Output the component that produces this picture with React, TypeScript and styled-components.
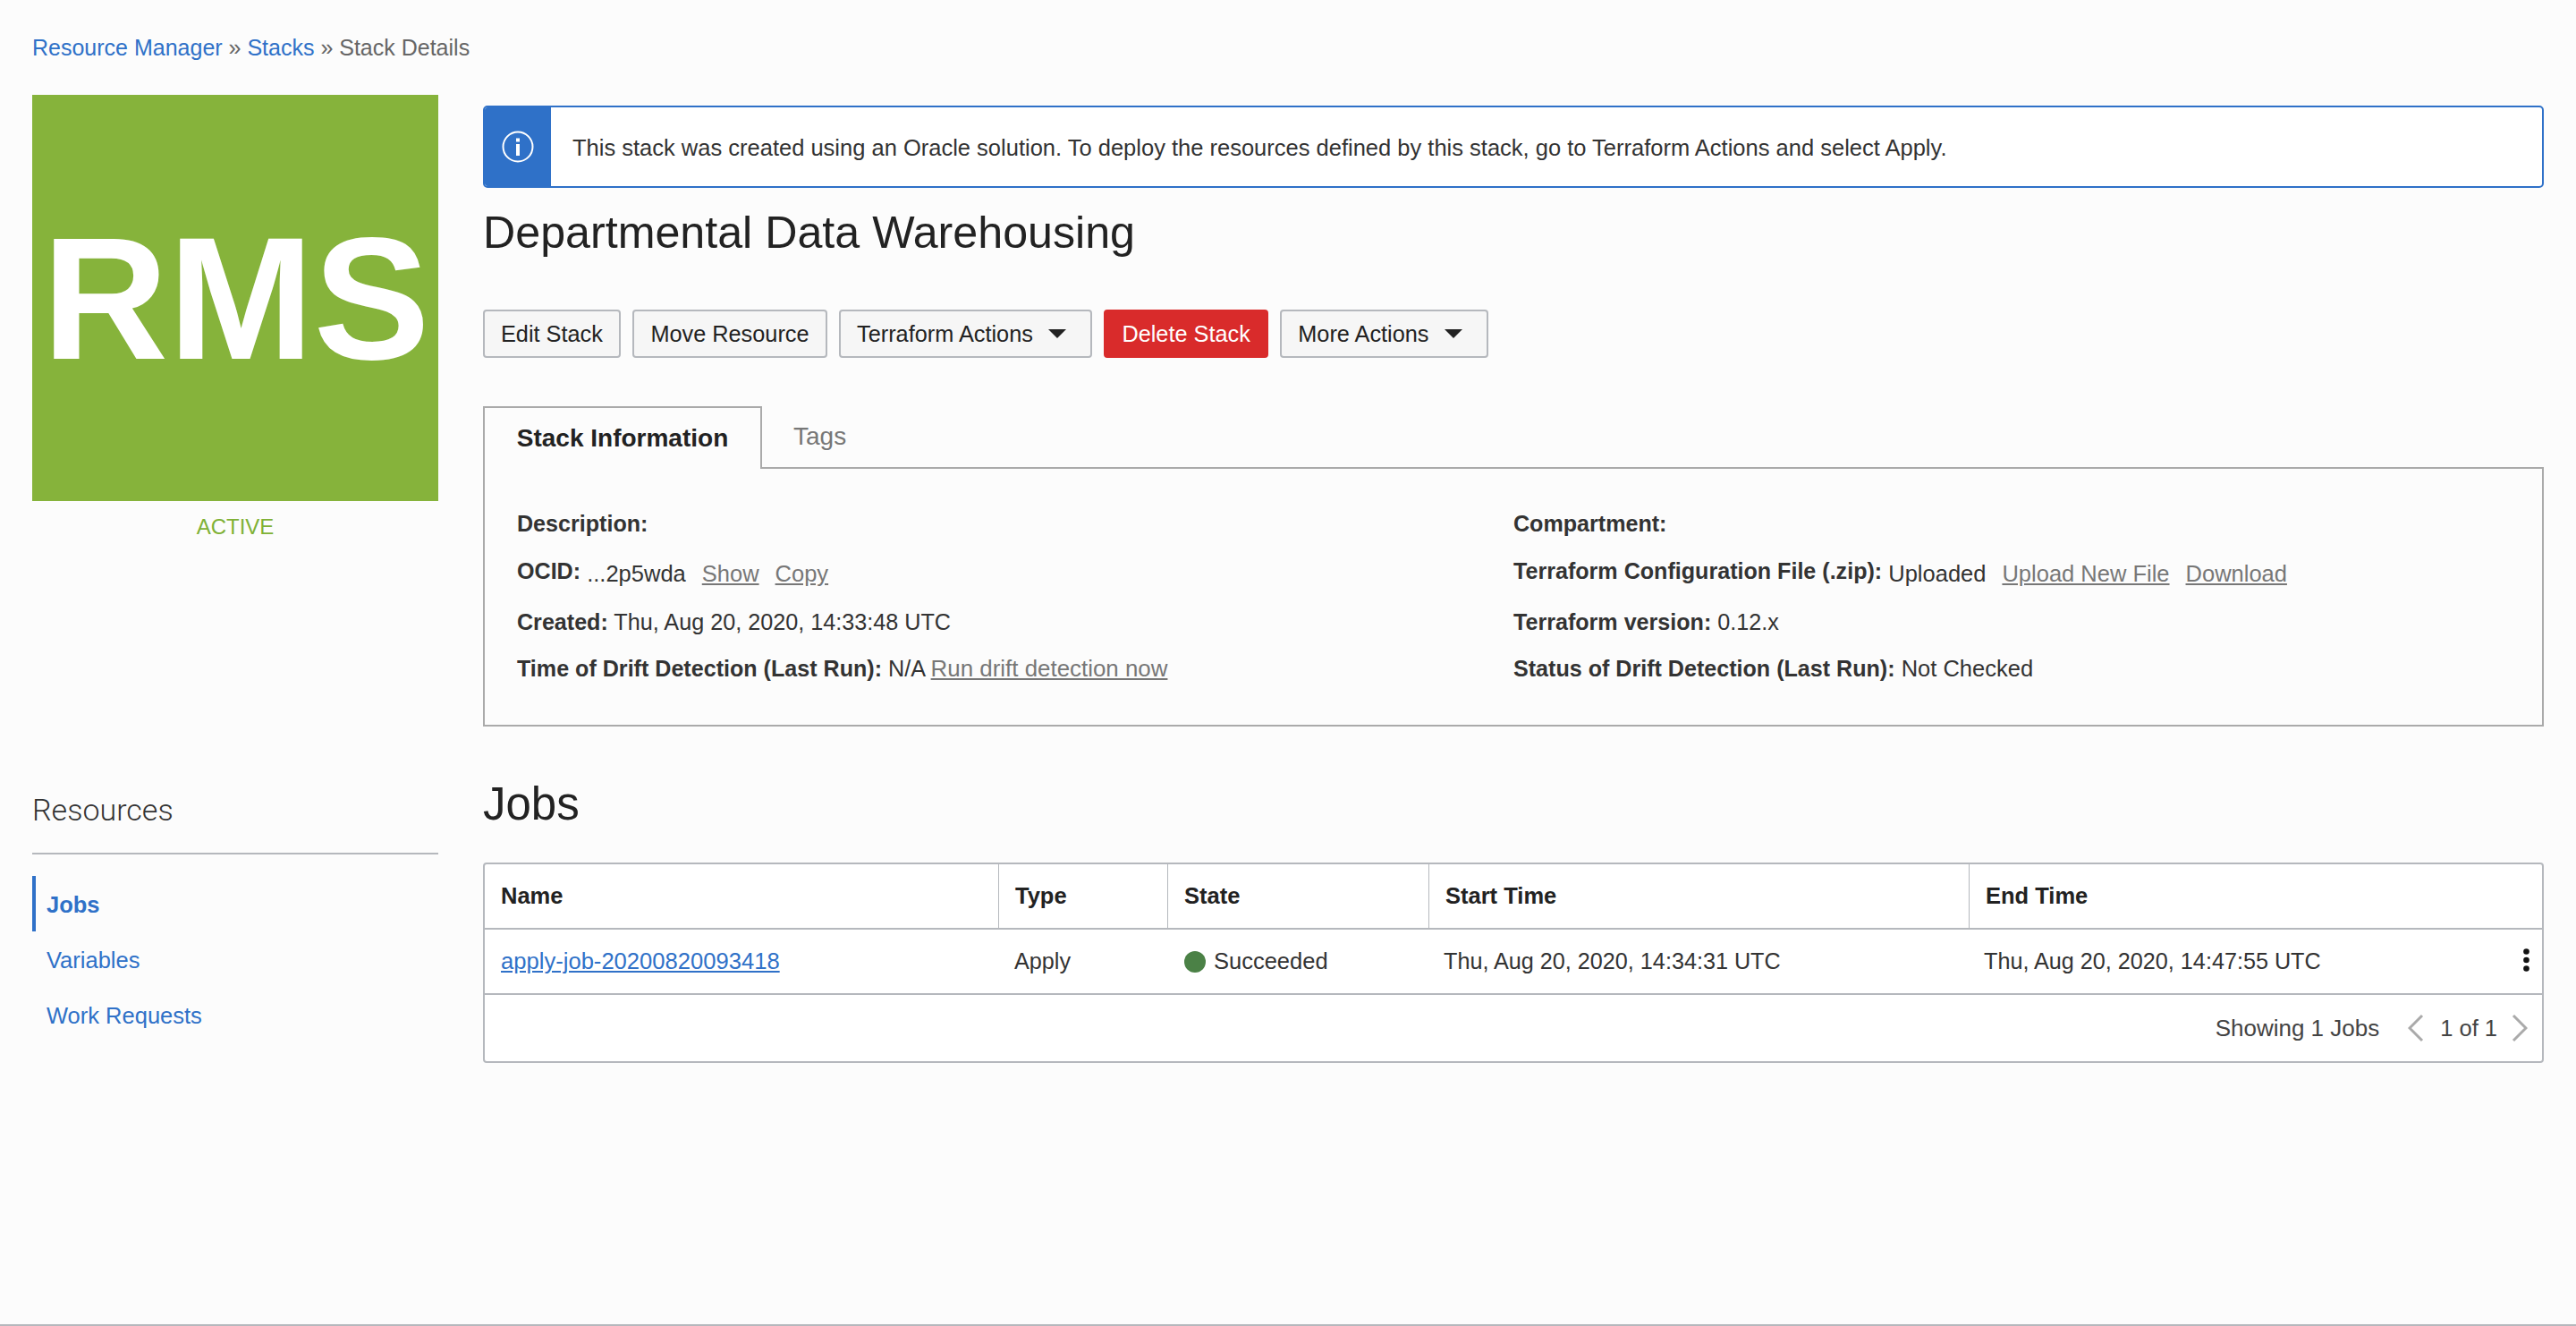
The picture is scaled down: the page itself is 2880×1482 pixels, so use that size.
import React from "react";
import styled, { createGlobalStyle } from "styled-components";

const Global = createGlobalStyle`
  html, body { margin: 0; padding: 0; background: #fcfcfc; }
  body { font-family: "Liberation Sans", Arial, sans-serif; color: #333; }
  * { box-sizing: border-box; }
`;

const Page = styled.div`
  height: 1482px;
  padding: 36px 36px 0;
  border-bottom: 2px solid #b5b8bd;
  overflow: hidden;
`;
const Crumbs = styled.nav`
  font-size: 25px;
  line-height: 34px;
  height: 34px;
  color: #666;
`;
const BlueLink = styled.a`
  color: #2f71c8;
  text-decoration: none;
`;
const Layout = styled.div`
  display: grid;
  grid-template-columns: 454px 1fr;
  column-gap: 50px;
  margin-top: 36px;
`;
const Side = styled.aside`
  display: flex;
  flex-direction: column;
`;
const Logo = styled.div`
  width: 454px;
  height: 454px;
  padding-left: 2px;
  background: #86b33b;
  color: #fff;
  font-weight: 700;
  font-size: 195px;
  line-height: 454px;
  text-align: center;
  white-space: nowrap;
`;
const Status = styled.div`
  margin-top: 14px;
  color: #7fb135;
  font-size: 24px;
  line-height: 30px;
  text-align: center;
`;
const ResTitle = styled.h2`
  margin: 278px 0 0;
  font-family: "Roboto", "Liberation Sans", sans-serif;
  font-weight: 300;
  font-size: 34px;
  line-height: 46px;
  color: #333;
`;
const ResNav = styled.ul`
  list-style: none;
  margin: 25px 0 0;
  padding: 24px 0 0;
  border-top: 2px solid #b5b8bd;
`;
const ResItem = styled.li<{ $active?: boolean }>`
  height: 62px;
  padding: 2px 0 0 12px;
  border-left: 4px solid ${(p) => (p.$active ? "#2f71c8" : "transparent")};
  display: flex;
  align-items: center;
  font-size: 25.5px;
  font-weight: ${(p) => (p.$active ? 700 : 400)};
  color: #2f71c8;
`;
const Content = styled.main`
  min-width: 0;
  padding-top: 12px;
`;
const Banner = styled.div`
  display: flex;
  height: 92px;
  border: 2px solid #2f71c8;
  border-radius: 5px;
  background: #fff;
  overflow: hidden;
`;
const BannerIcon = styled.div`
  width: 74px;
  background: #2f71c8;
  display: flex;
  align-items: center;
  justify-content: center;
  flex: none;
`;
const BannerText = styled.div`
  display: flex;
  align-items: center;
  padding: 2px 0 0 24px;
  font-size: 25.5px;
  color: #333;
`;
const Title = styled.h1`
  margin: 20px 0 0;
  font-size: 50.2px;
  font-weight: 400;
  line-height: 60px;
  color: #222;
`;
const Toolbar = styled.div`
  display: flex;
  gap: 13.5px;
  margin-top: 56px;
`;
const Btn = styled.button<{ $danger?: boolean; $menu?: boolean }>`
  height: 54px;
  padding: 0 ${(p) => (p.$menu ? "27px" : "18px")} 0 18px;
  display: flex;
  align-items: center;
  gap: 17px;
  font-family: inherit;
  font-size: 25.3px;
  color: ${(p) => (p.$danger ? "#fff" : "#222")};
  background: ${(p) => (p.$danger ? "#d92b2b" : "#f6f6f6")};
  border: 2px solid ${(p) => (p.$danger ? "#d92b2b" : "#b5b8bd")};
  border-radius: 4px;
`;
const Caret = styled.span`
  width: 0;
  height: 0;
  border-left: 10px solid transparent;
  border-right: 10px solid transparent;
  border-top: 10px solid #222;
`;
const Tabs = styled.div`
  display: flex;
  align-items: flex-end;
  margin-top: 54px;
  height: 68px;
`;
const ActiveTab = styled.div`
  width: 312px;
  height: 70px;
  margin-bottom: -2px;
  border: 2px solid #aaa;
  border-bottom: 0;
  background: #fcfcfc;
  position: relative;
  z-index: 1;
  display: flex;
  align-items: center;
  justify-content: center;
  font-size: 28px;
  font-weight: 700;
  color: #222;
`;
const Tab = styled.div`
  height: 68px;
  padding: 0 35px;
  display: flex;
  align-items: center;
  font-size: 28px;
  color: #777;
`;
const Panel = styled.section`
  height: 290px;
  border: 2px solid #aaa;
  padding: 46px 36px 0;
  display: grid;
  grid-template-columns: 1114px 1fr;
`;
const Col = styled.div`
  display: flex;
  flex-direction: column;
`;
const Field = styled.div<{ $h: number; $size?: number }>`
  height: ${(p) => p.$h}px;
  font-size: ${(p) => p.$size ?? 25.2}px;
  line-height: 30px;
  color: #333;
  white-space: nowrap;
`;
const Label = styled.b`
  font-size: 25.1px;
  color: #333;
`;
const Raised = styled(Label)`
  position: relative;
  top: -3px;
`;
const GreyLink = styled.a<{ $gap?: number; $size?: number }>`
  color: #777;
  text-decoration: underline;
  margin-left: ${(p) => p.$gap ?? 0}px;
  font-size: ${(p) => (p.$size ? `${p.$size}px` : "inherit")};
`;
const JobsTitle = styled.h2`
  margin: 57px 0 0;
  font-size: 51px;
  font-weight: 400;
  line-height: 60px;
  color: #222;
`;
const TableWrap = styled.div`
  margin-top: 35px;
  border: 2px solid #b5b8bd;
  border-radius: 4px;
  background: #fff;
  height: 224px;
`;
const Row = styled.div`
  display: grid;
  grid-template-columns: 575px 189px 292px 604px 1fr;
  height: 73px;
  border-bottom: 2px solid #b5b8bd;
`;
const HeadCell = styled.div<{ $last?: boolean }>`
  display: flex;
  align-items: center;
  padding-left: 18px;
  font-size: 25.5px;
  font-weight: 700;
  color: #222;
  border-right: ${(p) => (p.$last ? "0" : "1px solid #b5b8bd")};
`;
const Cell = styled.div<{ $pad?: number; $size?: number }>`
  display: flex;
  align-items: center;
  padding-left: ${(p) => p.$pad ?? 16}px;
  font-size: ${(p) => p.$size ?? 25.2}px;
  color: #333;
  position: relative;
  white-space: nowrap;
`;
const JobLink = styled.a`
  color: #2f71c8;
  text-decoration: underline;
`;
const Dot = styled.span`
  width: 24px;
  height: 24px;
  border-radius: 50%;
  background: #4b8146;
  margin-right: 9px;
`;
const Kebab = styled.svg`
  position: absolute;
  right: 14px;
  top: calc(50% - 2px);
  transform: translateY(-50%);
`;
const Footer = styled.div`
  display: flex;
  align-items: center;
  justify-content: flex-end;
  height: 74px;
  padding-right: 16px;
  font-size: 25.5px;
  color: #444;
`;
const Showing = styled.span`
  font-size: 26px;
  margin-right: 32px;
`;
const Pager = styled.span`
  margin: 0 16px 0 18px;
`;
const Chevron = styled.svg`
  flex: none;
`;

export default function App() {
  return (
    <Page>
      <Global />
      <Crumbs>
        <BlueLink>Resource Manager</BlueLink> » <BlueLink>Stacks</BlueLink> » Stack Details
      </Crumbs>
      <Layout>
        <Side>
          <Logo>RMS</Logo>
          <Status>ACTIVE</Status>
          <ResTitle>Resources</ResTitle>
          <ResNav>
            <ResItem $active>Jobs</ResItem>
            <ResItem>Variables</ResItem>
            <ResItem>Work Requests</ResItem>
          </ResNav>
        </Side>
        <Content>
          <Banner>
            <BannerIcon>
              <svg width="36" height="36" viewBox="0 0 36 36" fill="none">
                <circle cx="18" cy="18" r="16.5" stroke="#fff" strokeWidth="2" />
                <rect x="16" y="15" width="4" height="13" fill="#fff" />
                <rect x="16" y="8.5" width="4" height="4" fill="#fff" />
              </svg>
            </BannerIcon>
            <BannerText>
              This stack was created using an Oracle solution. To deploy the resources defined by this stack, go to Terraform Actions and select Apply.
            </BannerText>
          </Banner>
          <Title>Departmental Data Warehousing</Title>
          <Toolbar>
            <Btn>Edit Stack</Btn>
            <Btn>Move Resource</Btn>
            <Btn $menu>Terraform Actions<Caret /></Btn>
            <Btn $danger>Delete Stack</Btn>
            <Btn $menu>More Actions<Caret /></Btn>
          </Toolbar>
          <Tabs>
            <ActiveTab>Stack Information</ActiveTab>
            <Tab>Tags</Tab>
          </Tabs>
          <Panel>
            <Col>
              <Field $h={56}><Label>Description:</Label></Field>
              <Field $h={54} $size={25.5}>
                <Raised>OCID:</Raised> ...2p5wda<GreyLink $gap={18}>Show</GreyLink><GreyLink $gap={18}>Copy</GreyLink>
              </Field>
              <Field $h={52}><Label>Created:</Label> Thu, Aug 20, 2020, 14:33:48 UTC</Field>
              <Field $h={52}>
                <Label>Time of Drift Detection (Last Run):</Label> N/A <GreyLink $size={25.9}>Run drift detection now</GreyLink>
              </Field>
            </Col>
            <Col>
              <Field $h={56}><Label>Compartment:</Label></Field>
              <Field $h={54} $size={25.5}>
                <Raised>Terraform Configuration File (.zip):</Raised> Uploaded<GreyLink $gap={18}>Upload New File</GreyLink><GreyLink $gap={18}>Download</GreyLink>
              </Field>
              <Field $h={52}><Label>Terraform version:</Label> 0.12.x</Field>
              <Field $h={52} $size={25.5}><Label>Status of Drift Detection (Last Run):</Label> Not Checked</Field>
            </Col>
          </Panel>
          <JobsTitle>Jobs</JobsTitle>
          <TableWrap>
            <Row>
              <HeadCell>Name</HeadCell>
              <HeadCell>Type</HeadCell>
              <HeadCell>State</HeadCell>
              <HeadCell>Start Time</HeadCell>
              <HeadCell $last>End Time</HeadCell>
            </Row>
            <Row>
              <Cell $pad={18} $size={25.6}><JobLink>apply-job-20200820093418</JobLink></Cell>
              <Cell $pad={17}>Apply</Cell>
              <Cell $pad={18} $size={25.5}><Dot />Succeeded</Cell>
              <Cell>Thu, Aug 20, 2020, 14:34:31 UTC</Cell>
              <Cell>
                Thu, Aug 20, 2020, 14:47:55 UTC
                <Kebab width="7" height="26" viewBox="0 0 7 26" fill="#111">
                  <circle cx="3.5" cy="3.5" r="3.3" />
                  <circle cx="3.5" cy="13" r="3.3" />
                  <circle cx="3.5" cy="22.5" r="3.3" />
                </Kebab>
              </Cell>
            </Row>
            <Footer>
              <Showing>Showing 1 Jobs</Showing>
              <Chevron width="18" height="32" viewBox="0 0 18 32" fill="none" stroke="#aaa" strokeWidth="3">
                <path d="M16 2 2 16l14 14" />
              </Chevron>
              <Pager>1 of 1</Pager>
              <Chevron width="18" height="32" viewBox="0 0 18 32" fill="none" stroke="#aaa" strokeWidth="3">
                <path d="M2 2 16 16 2 30" />
              </Chevron>
            </Footer>
          </TableWrap>
        </Content>
      </Layout>
    </Page>
  );
}
